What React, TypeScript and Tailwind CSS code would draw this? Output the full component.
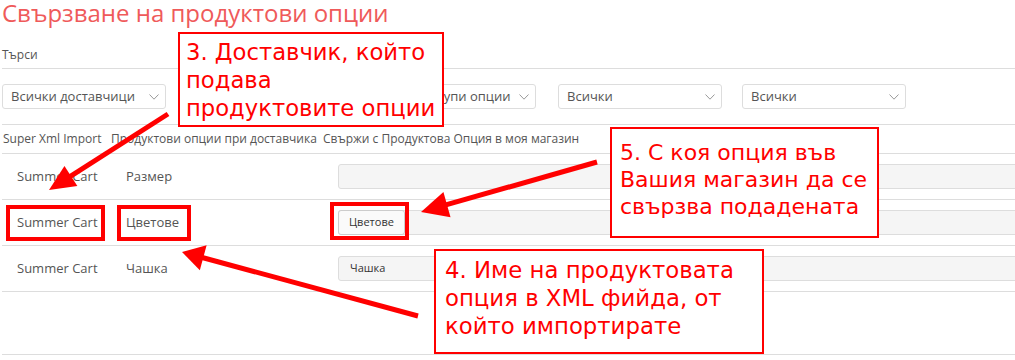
import React from "react";

function Chevron() {
  return (
    <svg width="10" height="6" viewBox="0 0 10 6" className="shrink-0">
      <polyline points="0.5,0.5 5,5.2 9.5,0.5" fill="none" stroke="#9a9a9a" strokeWidth="1" />
    </svg>
  );
}

function Select({ label, className = "" }: { label: string; className?: string }) {
  return (
    <div
      className={
        "w-[164px] h-[25px] border border-[#ddd] rounded-[3px] bg-white flex items-center justify-between pl-[8px] pr-[6px] text-[13px] text-[#555] whitespace-nowrap overflow-hidden " +
        className
      }
    >
      <span>{label}</span>
      <Chevron />
    </div>
  );
}

function Arrow({
  x1,
  y1,
  x2,
  y2,
  len = 26,
  half = 13,
}: {
  x1: number;
  y1: number;
  x2: number;
  y2: number;
  len?: number;
  half?: number;
}) {
  const dx = x2 - x1;
  const dy = y2 - y1;
  const L = Math.hypot(dx, dy);
  const ux = dx / L;
  const uy = dy / L;
  const bx = x2 - ux * len;
  const by = y2 - uy * len;
  const px = -uy;
  const py = ux;
  const pts = `${x2},${y2} ${bx + px * half},${by + py * half} ${bx - px * half},${by - py * half}`;
  return (
    <g>
      <line x1={x1} y1={y1} x2={bx + ux * 3} y2={by + uy * 3} stroke="#ff0000" strokeWidth={5} />
      <polygon points={pts} fill="#ff0000" />
    </g>
  );
}

export default function App() {
  const rows = [
    { src: "Summer Cart", opt: "Размер", field: "empty" },
    { src: "Summer Cart", opt: "Цветове", field: "chip" },
    { src: "Summer Cart", opt: "Чашка", field: "text" },
  ];
  return (
    <div className="relative w-[1015px] h-[360px] overflow-hidden bg-white font-['Open_Sans',sans-serif] text-[#555]">
      <div className="w-[1060px] pl-[2px]">
        <h1 className="text-[24px] leading-[26px] text-[#ef5a5a] font-normal whitespace-nowrap">
          Свързване на продуктови опции
        </h1>
        <div className="pt-[19px] pb-[4px] h-[43px] border-b border-[#ddd] text-[12px] leading-[20px]">Търси</div>
        <div className="h-[56px] pt-[15px] border-b border-[#ddd] flex items-start">
          <Select label="Всички доставчици" />
          <Select label="Всички" className="ml-[20px]" />
          <Select label="Всички групи опции" className="ml-[22px]" />
          <Select label="Всички" className="ml-[22px]" />
          <Select label="Всички" className="ml-[20px]" />
        </div>
        <div className="h-[29px] border-b border-[#ddd] grid grid-cols-[109px_212px_1fr] items-center text-[12px] whitespace-nowrap">
          <div className="pl-[1px]">Super Xml Import</div>
          <div>Продуктови опции при доставчика</div>
          <div>Свържи с Продуктова Опция в моя магазин</div>
        </div>
        {rows.map((r, i) => (
          <div
            key={i}
            className="h-[46px] border-b border-[#ddd] grid grid-cols-[109px_212px_1fr] items-center text-[13px] whitespace-nowrap"
          >
            <div className="pl-[15px]">{r.src}</div>
            <div className="pl-[15px]">{r.opt}</div>
            <div className="pl-[15px]">
              <div className="h-[25px] bg-[#f5f5f5] border border-[#ddd] rounded-[3px] flex items-center text-[11px] text-[#333]">
                {r.field === "chip" && (
                  <div className="h-[25px] -my-px -ml-px px-[10px] flex items-center bg-[#fafafa] border border-[#ccc] rounded-[3px]">
                    Цветове
                  </div>
                )}
                {r.field === "text" && <span className="pl-[11px]">Чашка</span>}
              </div>
            </div>
          </div>
        ))}
        <div className="h-[63px] border-b border-[#ddd]" />
      </div>

      <svg className="absolute inset-0 pointer-events-none" width="1015" height="360">
        <rect x="8" y="207" width="95" height="32" fill="none" stroke="#ff0000" strokeWidth="4" />
        <rect x="119" y="207" width="70" height="32" fill="none" stroke="#ff0000" strokeWidth="4" />
        <rect x="332" y="204" width="75" height="34" fill="none" stroke="#ff0000" strokeWidth="4" />
        <Arrow x1={168} y1={114} x2={49} y2={190} len={26} half={12} />
        <Arrow x1={597} y1={162} x2={421} y2={212} len={27} half={13} />
        <Arrow x1={418} y1={316} x2={182} y2={252} len={22} half={13} />
      </svg>

      <div className="absolute left-[178px] top-[32px] w-[266px] h-[95px] border-2 border-[#ff0000] bg-white pl-[6px] pt-[4px] font-['DejaVu_Sans',sans-serif] text-[22.7px] leading-[28px] text-[#ff0000] whitespace-nowrap">
        <div>3. Доставчик, който</div>
        <div>подава</div>
        <div>продуктовите опции</div>
      </div>
      <div className="absolute left-[610px] top-[127px] w-[269px] h-[111px] border-2 border-[#ff0000] bg-white pl-[8px] pt-[10px] font-['DejaVu_Sans',sans-serif] text-[22px] leading-[27px] text-[#ff0000] whitespace-nowrap">
        <div>5. С коя опция във</div>
        <div>Вашия магазин да се</div>
        <div>свързва подадената</div>
      </div>
      <div className="absolute left-[434px] top-[249px] w-[330px] h-[105px] border-2 border-[#ff0000] bg-white pl-[9px] pt-[5px] font-['DejaVu_Sans',sans-serif] text-[22.8px] leading-[28px] text-[#ff0000] whitespace-nowrap">
        <div>4. Име на продуктовата</div>
        <div>опция в XML фийда, от</div>
        <div>който импортирате</div>
      </div>
    </div>
  );
}
